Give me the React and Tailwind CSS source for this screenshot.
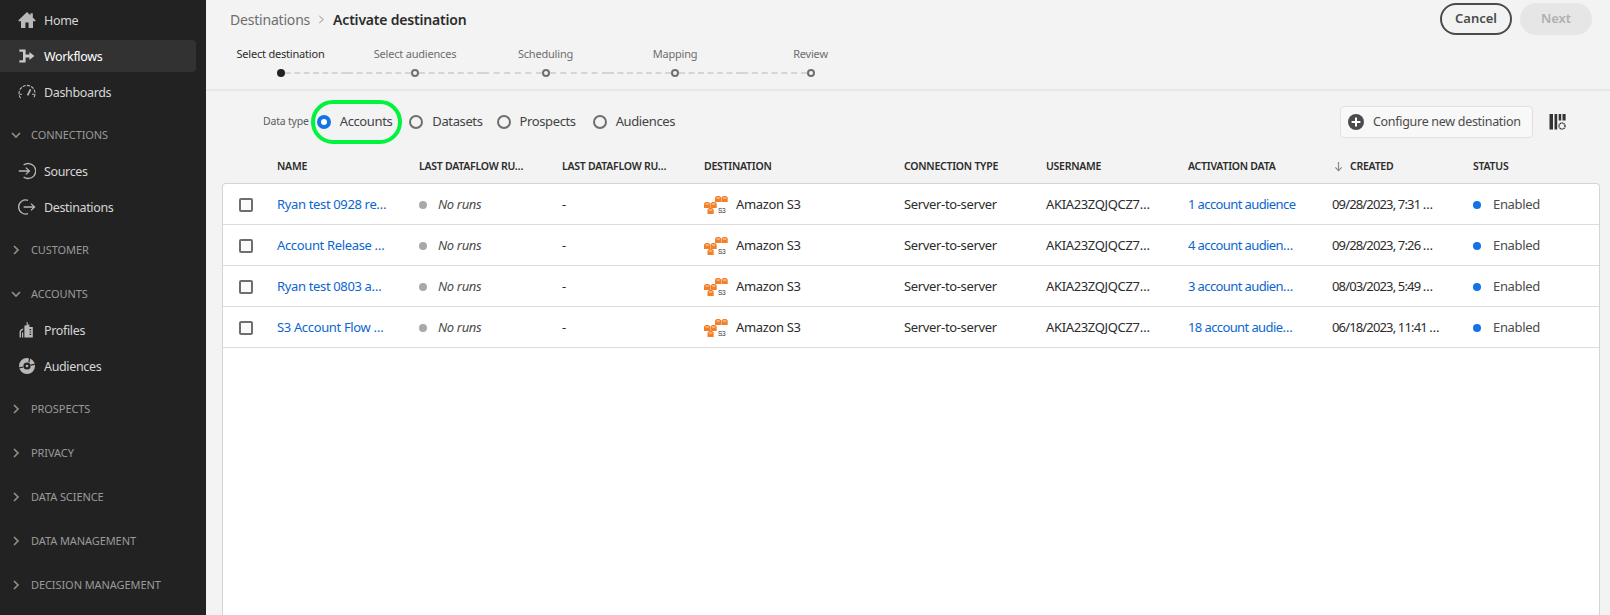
const Ic = ({ children, className = "" }) => (
  <svg viewBox="0 0 18 18" className={`w-[18px] h-[18px] shrink-0 ${className}`} fill="currentColor">{children}</svg>
);
const HomeIc = () => <Ic><path d="M9 1 0.2 9.4 1 10.2H3V17H7.4V11.6H10.6V17H15V10.2H17L17.8 9.4 14.8 6.5V2.2H12.4V4.2Z" /></Ic>;
const WorkIc = () => <Ic><path d="M1.4 2.4H7.6V7.4H11.4V5L16.4 9 11.4 13V10.6H7.6V15.6H1.4V13.2H5V4.8H1.4Z" /></Ic>;
const DashIc = () => <Ic><g fill="none" stroke="currentColor" strokeWidth="1.1"><path d="M2.6 15.2A8 8 0 1 1 15.4 15.2" strokeDasharray="3.2 1.1" /><path d="M9.6 12.4 12.6 6.4" strokeWidth="1.8" /><path d="M1.6 11.2H4M14 11.2H16.4" /></g></Ic>;
const SrcIc = () => <Ic><g fill="none" stroke="currentColor" strokeWidth="1.3"><path d="M5.6 3.1A7.5 7.5 0 1 1 5.6 14.9" /><path d="M0.8 9H11.4M7.8 5.6 11.4 9 7.8 12.4" /></g></Ic>;
const DestIc = () => <Ic><g fill="none" stroke="currentColor" strokeWidth="1.3"><path d="M10 2.4A7 7 0 1 0 10 15.6" /><path d="M5.6 9H16.6M13 5.6 16.6 9 13 12.4" /></g></Ic>;
const ProfIc = () => <Ic><path d="M8.6 1H9.6V3.6H11.4V6H14.8V16.6H6.4V4.4H8.6ZM11.6 8V9.2H13.2V8ZM11.6 10.4V11.6H13.2V10.4ZM11.6 12.8V14H13.2V12.8Z" /><path d="M5.2 7.6V8.8C3.8 9.2 3 10.2 3 11.4V16.6H4V11.6H5.2V16.6H1.6V11.2C1.6 9.4 3 8 5.2 7.6Z" /></Ic>;
const AudIc = () => (
  <Ic>
    <path fillRule="evenodd" d="M9 1A8 8 0 1 1 1 9 8 8 0 0 1 9 1ZM9 5.4A3.6 3.6 0 1 0 12.6 9 3.6 3.6 0 0 0 9 5.4Z" />
    <circle cx="9" cy="9" r="1.3" />
    <path d="M10.4 5 11 0.5H12.2L11.6 5.4ZM12.6 7.6 17.6 6.4 18 7.6 13 8.8Z" fill="#222222" />
    <path d="M1 10.2 5.4 9.6V10.6L1.4 11.6Z" fill="#222222" />
  </Ic>
);
const ChevD = () => <svg viewBox="0 0 10 10" className="w-[10px] h-[10px] shrink-0" fill="none" stroke="currentColor" strokeWidth="1.7"><path d="M1 3 5 7 9 3" /></svg>;
const ChevR = () => <svg viewBox="0 0 10 10" className="w-[10px] h-[10px] shrink-0" fill="none" stroke="currentColor" strokeWidth="1.7"><path d="M3 1 7 5 3 9" /></svg>;

const NavItem = ({ icon, label, active }) => (
  <div className={`h-8 mb-1 mr-[10px] pl-[18px] flex items-center gap-[8px] rounded-r-[4px] text-[12.5px] tracking-[-0.35px] ${active ? "bg-[#323232] text-white" : "text-[#d6d6d6]"}`}>
    <span className={active ? "text-[#c8c8c8]" : "text-[#b8b8b8]"}>{icon}</span>
    <span className="pt-[2px]">{label}</span>
  </div>
);
const Section = ({ label, open, children }) => (
  <div className={open ? "pb-[3px]" : "pb-1"}>
    <div className="h-10 pl-[11px] flex items-center gap-[10px] text-[11px] tracking-[-0.08px] text-[#9a9a9a]">
      <span className="text-[#8e8e8e]">{open ? <ChevD /> : <ChevR />}</span>
      {label}
    </div>
    {children}
  </div>
);

const Sidebar = () => (
  <aside className="w-[206px] shrink-0 bg-[#222222] pt-1 overflow-hidden">
    <div className="pb-[3px]">
      <NavItem icon={<HomeIc />} label="Home" />
      <NavItem icon={<WorkIc />} label="Workflows" active />
      <NavItem icon={<DashIc />} label="Dashboards" />
    </div>
    <Section label="CONNECTIONS" open>
      <NavItem icon={<SrcIc />} label="Sources" />
      <NavItem icon={<DestIc />} label="Destinations" />
    </Section>
    <Section label="CUSTOMER" />
    <Section label="ACCOUNTS" open>
      <NavItem icon={<ProfIc />} label="Profiles" />
      <NavItem icon={<AudIc />} label="Audiences" />
    </Section>
    <Section label="PROSPECTS" />
    <Section label="PRIVACY" />
    <Section label="DATA SCIENCE" />
    <Section label="DATA MANAGEMENT" />
    <Section label="DECISION MANAGEMENT" />
  </aside>
);

const steps = [
  ["Select destination", "w-[133px]"],
  ["Select audiences", "w-[136px]"],
  ["Scheduling", "w-[125px]"],
  ["Mapping", "w-[134px]"],
  ["Review", "w-[137px]"],
];
const Stepper = () => (
  <div className="flex -ml-[16px] mt-[9px]">
    {steps.map(([s, w], i) => (
      <div key={s} className={`${w} flex flex-col items-center gap-[5px]`}>
        <div className={`text-[11px] tracking-[-0.2px] leading-[20px] ${i === 0 ? "text-[#2c2c2c]" : "text-[#6e6e6e]"}`}>{s}</div>
        <div className="w-full flex items-center h-2">
          <div className={`flex-1 border-t-2 border-dashed ${i === 0 ? "border-transparent" : "border-[#d5d5d5]"}`} />
          {i === 0 ? (
            <div className="w-2 h-2 rounded-full bg-[#222222]" />
          ) : (
            <div className="w-2 h-2 rounded-full border-2 border-[#707070] bg-[#f3f3f3]" />
          )}
          <div className={`flex-1 border-t-2 border-dashed ${i === 4 ? "border-transparent" : "border-[#d5d5d5]"}`} />
        </div>
      </div>
    ))}
  </div>
);

const Radio = ({ label, checked, className = "" }) => (
  <div className={`flex items-center gap-[9px] text-[13px] tracking-[-0.38px] text-[#444444] ${className}`}>
    {checked ? (
      <span className="w-[14px] h-[14px] rounded-full border-[4px] border-[#1473e6] bg-white" />
    ) : (
      <span className="w-[14px] h-[14px] rounded-full border-2 border-[#6e6e6e]" />
    )}
    {label}
  </div>
);

const S3Ic = () => (
  <svg viewBox="0 0 24 18" className="w-[24px] h-[18px] shrink-0">
    {[[11,0],[17.5,0],[0,6],[6.5,6],[3.5,12]].map(([x, y], i) => (
      <g key={i}>
        <path d={`M${x} ${y + 1.6}L${x + 1.6} ${y}H${x + 4.6}L${x + 6.2} ${y + 1.6}V${y + 6}H${x}Z`} fill="#f27f2a" />
        <rect x={x + 1.4} y={y + 1.5} width="3.4" height="1" fill="#ffd9b8" />
      </g>
    ))}
    <text x="14" y="17.4" fontSize="6.5" fill="#333" fontFamily="'Liberation Sans', sans-serif">S3</text>
  </svg>
);

const cols = "grid grid-cols-[54px_142px_143px_142px_200px_142px_142px_144px_141px_1fr]";
const rows = [
  ["Ryan test 0928 re…", "1 account audience", "09/28/2023, 7:31 …"],
  ["Account Release …", "4 account audien…", "09/28/2023, 7:26 …"],
  ["Ryan test 0803 a…", "3 account audien…", "08/03/2023, 5:49 …"],
  ["S3 Account Flow …", "18 account audie…", "06/18/2023, 11:41 …"],
];
const headers = ["NAME", "LAST DATAFLOW RU…", "LAST DATAFLOW RU…", "DESTINATION", "CONNECTION TYPE", "USERNAME", "ACTIVATION DATA"];

const Table = () => (
  <div className="ml-[16px] mr-[10px] flex-1 flex flex-col min-h-0">
    <div className={`${cols} h-[32px] pl-px pb-[1px] items-center text-[10.5px] tracking-[-0.25px] font-semibold text-[#2c2c2c]`}>
      <div />
      {headers.map((h, i) => <div key={i} className="whitespace-nowrap">{h}</div>)}
      <div className="flex items-center gap-[7px] ml-[2px]">
        <svg viewBox="0 0 10 12" className="w-[9px] h-[11px] text-[#8a8a8a]" fill="none" stroke="currentColor" strokeWidth="1.3"><path d="M5 1V10.5M1.5 7 5 10.5 8.5 7" /></svg>
        CREATED
      </div>
      <div>STATUS</div>
    </div>
    <div className="flex-1 bg-white border border-b-0 border-[#d5d5d5] rounded-t-[4px]">
      {rows.map((r, i) => (
        <div key={i} className={`${cols} h-[41px] pt-px items-center border-b border-[#dcdcdc] text-[13px] tracking-[-0.35px] text-[#2c2c2c]`}>
          <div className="pl-[16px]"><span className="block w-[14px] h-[14px] border-2 border-[#6e6e6e] rounded-[2px] bg-[#fafafa]" /></div>
          <div className="text-[#0d66d0]">{r[0]}</div>
          <div className="flex items-center gap-[11px] italic text-[#4b4b4b]">
            <span className="w-2 h-2 rounded-full bg-[#a8a8a8]" />
            No runs
          </div>
          <div>-</div>
          <div className="flex items-center gap-[8px]"><S3Ic />Amazon S3</div>
          <div>Server-to-server</div>
          <div>AKIA23ZQJQCZ7…</div>
          <div className="text-[#0d66d0] tracking-[-0.6px]">{r[1]}</div>
          <div className="whitespace-nowrap tracking-[-0.85px]">{r[2]}</div>
          <div className="flex items-center gap-[12px] text-[#4b4b4b]">
            <span className="w-2 h-2 rounded-full bg-[#1473e6]" />
            Enabled
          </div>
        </div>
      ))}
    </div>
  </div>
);

export default function App() {
  return (
    <div className="w-[1610px] h-[615px] flex overflow-hidden bg-[#f3f3f3] font-['Noto_Sans',sans-serif]">
      <Sidebar />
      <main className="flex-1 flex flex-col min-w-0">
        <header className="h-[91px] shrink-0 border-b-2 border-[#e8e8e8] pl-[24px] pr-[18px]">
          <div className="flex items-start justify-between pt-[3px] h-[35px]">
            <div className="flex items-center h-[34px] -mt-[1px] text-[14px] tracking-[-0.2px] gap-[8px]">
              <span className="text-[#6e6e6e]">Destinations</span>
              <svg viewBox="0 0 8 10" className="w-[7px] h-[9px] text-[#8a8a8a]" fill="none" stroke="currentColor" strokeWidth="1.1"><path d="M1.5 1 6 5 1.5 9" /></svg>
              <span className="font-semibold text-[#2c2c2c]">Activate destination</span>
            </div>
            <div className="flex gap-2">
              <div className="w-[72px] h-8 rounded-full border-2 border-[#4b4b4b] flex items-center justify-center text-[13px] font-semibold text-[#4b4b4b]">Cancel</div>
              <div className="w-[72px] h-8 rounded-full bg-[#e6e6e6] flex items-center justify-center text-[13px] font-semibold text-[#b0b0b0]">Next</div>
            </div>
          </div>
          <Stepper />
        </header>
        <div className="h-[60px] pt-[2px] shrink-0 flex items-center pl-[57px] pr-[43px]">
          <span className="text-[10.5px] tracking-[-0.2px] text-[#5c5c5c] mr-[8px]">Data type</span>
          <div className="relative mr-[17px]">
            <Radio label="Accounts" checked />
            <div className="absolute -left-[6px] -right-[10px] -top-[12px] -bottom-[12px] border-[4px] border-[#00f33d] rounded-full" />
          </div>
          <Radio label="Datasets" className="mr-[14px]" />
          <Radio label="Prospects" className="mr-[17px]" />
          <Radio label="Audiences" />
          <div className="ml-auto flex items-center">
            <div className="w-[193px] h-8 bg-[#f8f8f8] border border-[#e1e1e1] rounded-[4px] flex items-center gap-[8px] pl-[6px] text-[12.5px] tracking-[-0.3px] text-[#4b4b4b] whitespace-nowrap">
              <svg viewBox="0 0 18 18" className="w-[18px] h-[18px] shrink-0"><circle cx="9" cy="9" r="8" fill="#4b4b4b" /><path d="M9 4.6V13.4M4.6 9H13.4" stroke="#fff" strokeWidth="2" /></svg>
              Configure new destination
            </div>
            <svg viewBox="0 0 18 18" className="w-[18px] h-[18px] ml-[16px] text-[#333]" fill="currentColor">
              <path d="M0.5 1H4V16.5H0.5ZM5.5 1H8.2V16.5H5.5ZM9.7 1H12.2V7.6H9.7ZM13.5 1H16.6V7.6H13.5Z" />
              <circle cx="13" cy="13" r="3" fill="none" stroke="currentColor" strokeWidth="1.4" strokeDasharray="1.4 0.5" />
            </svg>
          </div>
        </div>
        <Table />
      </main>
    </div>
  );
}
